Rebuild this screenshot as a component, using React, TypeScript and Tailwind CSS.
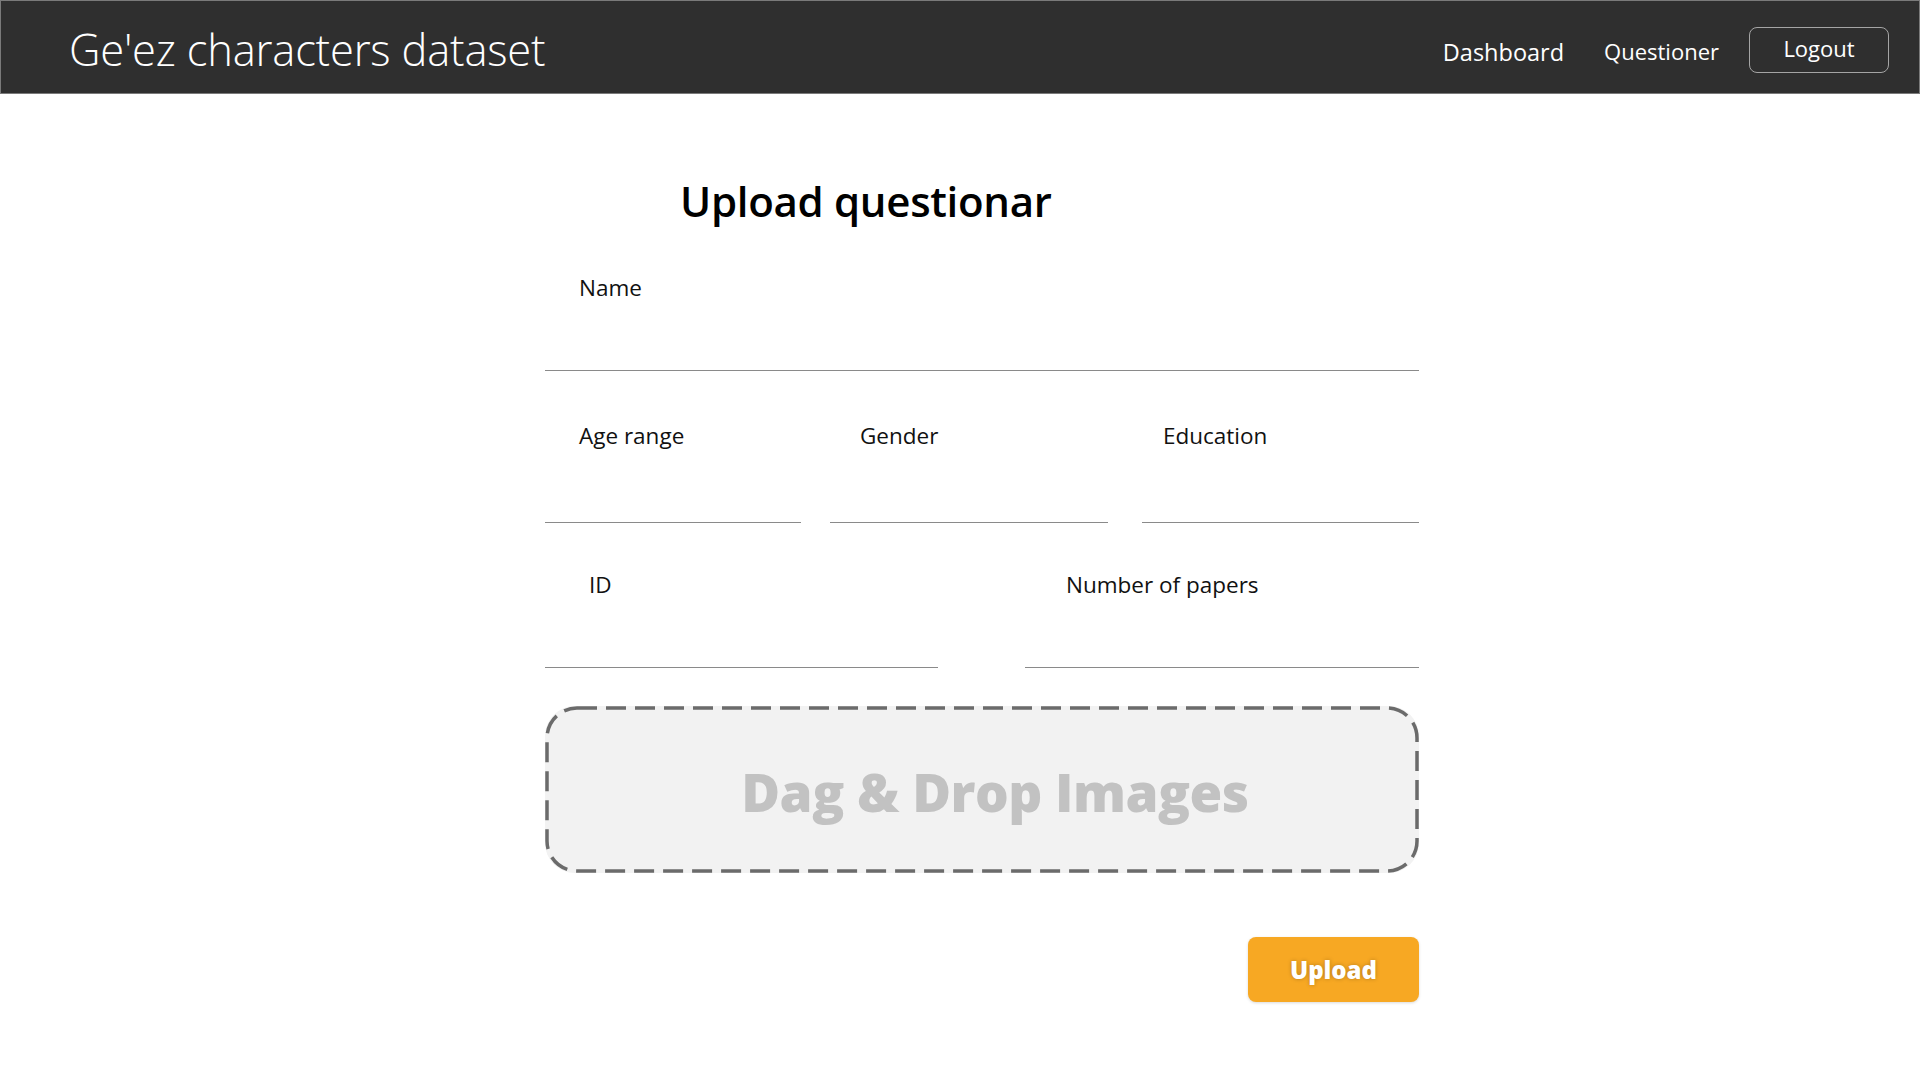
const font = { fontFamily: '"Open Sans", "Noto Sans", sans-serif' };

function Field({ label, labelPad, height, className }: { label: string; labelPad: string; height: string; className: string }) {
  return (
    <div className={`${className} ${height} border-b border-[#8a8a8a] flex flex-col`}>
      <label className={`${labelPad} text-[22.5px] leading-[30px] text-[#111]`}>{label}</label>
    </div>
  );
}

export default function App() {
  return (
    <div className="min-h-screen bg-white" style={font}>
      <header className="h-[94px] bg-[#2f2f2f] border border-[#7a7a7a] flex items-center pl-[68px] pr-[30px]">
        <h1 className="text-[43.5px] font-light text-white tracking-[-0.2px] leading-none pt-[6px]">
          Ge'ez characters dataset
        </h1>
        <nav className="ml-auto flex items-center pt-[6px]">
          <a className="text-[23.5px] text-white mt-[5px]">Dashboard</a>
          <a className="text-[22px] text-white ml-[40px] mt-[3px]">Questioner</a>
          <button className="ml-[30px] w-[140px] h-[46px] rounded-[8px] border border-[#a5a5a5] text-[22px] text-white leading-none pb-[4px]">
            Logout
          </button>
        </nav>
      </header>

      <main className="w-[874px] ml-[545px] pb-[60px]">
        <h2 className="mt-[82px] pl-[135px] text-[42px] leading-[50px] font-semibold text-black tracking-[-0.3px]">
          Upload questionar
        </h2>

        <Field label="Name" labelPad="pl-[34px]" height="h-[98px]" className="mt-[47px] w-full" />

        <div className="mt-[50px] flex">
          <Field label="Age range" labelPad="pl-[34px]" height="h-[102px]" className="w-[256px]" />
          <Field label="Gender" labelPad="pl-[30px]" height="h-[102px]" className="w-[278px] ml-[29px]" />
          <Field label="Education" labelPad="pl-[21px]" height="h-[102px]" className="w-[277px] ml-[34px]" />
        </div>

        <div className="mt-[47px] flex">
          <Field label="ID" labelPad="pl-[44px]" height="h-[98px]" className="w-[393px]" />
          <Field label="Number of papers" labelPad="pl-[41px]" height="h-[98px]" className="w-[394px] ml-auto" />
        </div>

        <div className="relative mt-[38px] h-[167px] rounded-[30px] bg-[#f2f2f2] flex items-center justify-center">
          <svg className="absolute inset-0 pointer-events-none" width="874" height="167" viewBox="0 0 874 167">
            <rect x="2" y="2" width="870" height="163" rx="30" fill="none" stroke="#6b6b6b" strokeWidth="3.5" strokeDasharray="20 9" />
          </svg>
          <span className="relative text-[53px] font-extrabold text-[#c2c2c2] tracking-[-0.5px] ml-[26px] mt-[4px]">Dag &amp; Drop Images</span>
        </div>

        <div className="mt-[64px] flex justify-end">
          <button className="w-[171px] h-[65px] rounded-[8px] bg-[#f7a823] text-white text-[24px] font-extrabold [text-shadow:0_0_4px_rgba(0,0,0,0.25)] shadow-[0_1px_3px_rgba(0,0,0,0.15)]">
            Upload
          </button>
        </div>
      </main>
    </div>
  );
}
